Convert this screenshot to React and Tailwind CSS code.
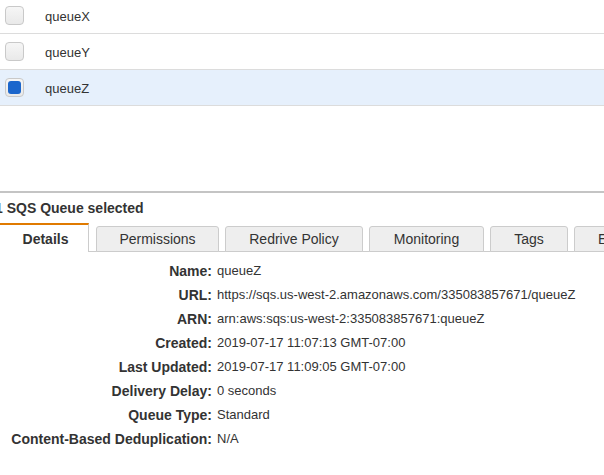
import React from "react";

const rows = [
  { name: "queueX", checked: false },
  { name: "queueY", checked: false },
  { name: "queueZ", checked: true },
];

const details = [
  ["Name:", "queueZ"],
  ["URL:", "https://sqs.us-west-2.amazonaws.com/335083857671/queueZ"],
  ["ARN:", "arn:aws:sqs:us-west-2:335083857671:queueZ"],
  ["Created:", "2019-07-17 11:07:13 GMT-07:00"],
  ["Last Updated:", "2019-07-17 11:09:05 GMT-07:00"],
  ["Delivery Delay:", "0 seconds"],
  ["Queue Type:", "Standard"],
  ["Content-Based Deduplication:", "N/A"],
];

const tabs = [
  { label: "Permissions", cls: "w-[123px] ml-[7px] justify-center" },
  { label: "Redrive Policy", cls: "w-[138px] ml-[6px] justify-center" },
  { label: "Monitoring", cls: "w-[115px] ml-[6px] justify-center" },
  { label: "Tags", cls: "w-[78px] ml-[6px] justify-center" },
  { label: "Encryption", cls: "w-[130px] ml-[6px] justify-start pl-[23px]" },
];

function Checkbox({ checked }) {
  return (
    <div className="w-[19px] h-[19px] rounded-[4px] border border-[#c9c9c9] bg-gradient-to-b from-[#f6f6f6] to-[#e9e9e9] flex items-center justify-center shrink-0">
      {checked && <div className="w-[13px] h-[13px] rounded-[3px] bg-[#1b66cc]" />}
    </div>
  );
}

export default function App() {
  return (
    <div className="w-[604px] h-[475px] overflow-hidden bg-white text-[#333] font-['Liberation_Sans',Arial,sans-serif]">
      <div className="-mt-[2px] h-[193px]">
        {rows.map((r) => (
          <div
            key={r.name}
            className={`h-[36px] flex items-center border-b border-[#dcdcdc] ${r.checked ? "bg-[#e6f0fc]" : "bg-white"}`}
          >
            <div className="pl-[5px] w-[45px]">
              <Checkbox checked={r.checked} />
            </div>
            <span className="text-[13px] leading-none pt-[2px]">{r.name}</span>
          </div>
        ))}
      </div>
      <div className="border-t-2 border-[#c4c4c4]">
        <div className="h-[30px] flex items-center text-[14px] font-bold whitespace-nowrap -ml-[5px] pt-[1px]">
          1 SQS Queue selected
        </div>
        <div className="flex items-end h-[29px] border-b border-[#cccccc] whitespace-nowrap text-[14px]">
          <div className="shrink-0 w-[89px] h-[29px] -mb-px border-t-2 border-t-[#e07a00] border-r border-r-[#cccccc] bg-white flex items-center justify-center font-bold pt-[2px] pl-[3px]">
            Details
          </div>
          {tabs.map((t) => (
            <div
              key={t.label}
              className={`shrink-0 ${t.cls} h-[26px] -mb-px rounded-t-[3px] border border-[#cccccc] bg-[#eeeeee] flex items-center pt-[1px]`}
            >
              {t.label}
            </div>
          ))}
        </div>
        <div className="pt-[7px] grid grid-cols-[212px_1fr] gap-x-[5px] whitespace-nowrap">
          {details.map(([k, v]) => (
            <React.Fragment key={k}>
              <div className="h-[24px] flex items-center justify-end text-[14px] font-bold">{k}</div>
              <div className="h-[24px] flex items-center text-[13px]">{v}</div>
            </React.Fragment>
          ))}
        </div>
      </div>
    </div>
  );
}
